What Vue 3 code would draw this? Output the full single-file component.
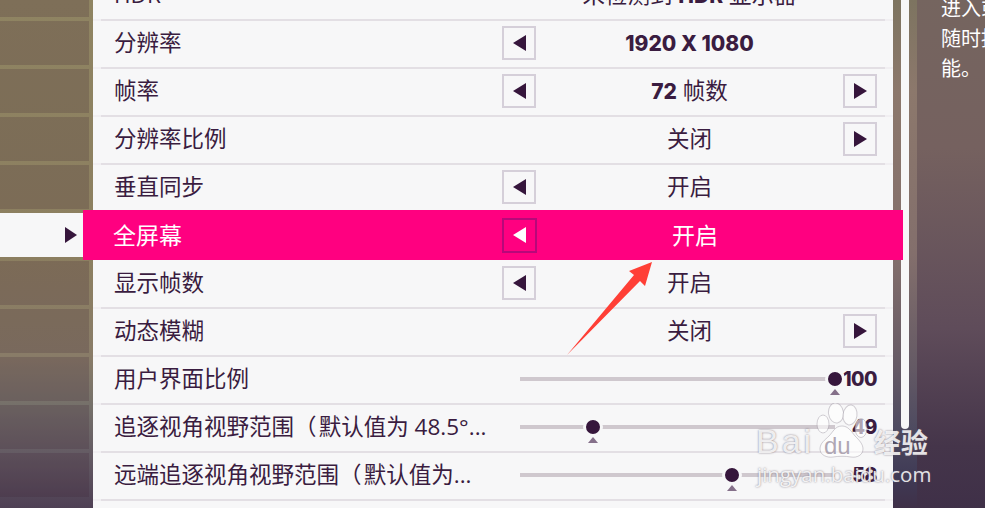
<script setup>
import { computed } from 'vue'

// Each row is either a left/right picker or a slider
const rows = [
  { label: 'HDR', pre: '未检测到 ', strong: 'HDR', post: ' 显示器' },
  { label: '分辨率', strong: '1920 X 1080', left: true },
  { label: '帧率', strong: '72', post: ' 帧数', left: true, right: true },
  { label: '分辨率比例', post: '关闭', right: true },
  { label: '垂直同步', post: '开启', left: true },
  { label: '全屏幕', post: '开启', left: true, active: true },
  { label: '显示帧数', post: '开启', left: true },
  { label: '动态模糊', post: '关闭', right: true },
  { label: '用户界面比例', slider: 100, shown: 100 },
  { label: '追逐视角视野范围（\u200A默认值为 48.5°...', slider: 23.2, shown: 49 },
  { label: '远端追逐视角视野范围（\u200A默认值为...', slider: 67.3, shown: 58 }
]

// Background cells on the left follow the same rows as the list
const cells = computed(() => rows.map((row) => row.active === true))
</script>

<template>
  <div class="screen">
    <aside class="tabs">
      <div v-for="(selected, i) in cells" :key="i" class="tab" :class="{ 'tab-selected': selected }">
        <span v-if="selected" class="tab-arrow"></span>
      </div>
    </aside>

    <main class="panel">
      <div v-for="row in rows" :key="row.label" class="row" :class="{ 'row-active': row.active }">
        <div class="row-label">{{ row.label }}</div>

        <div v-if="row.slider !== undefined" class="slider">
          <div class="slider-track">
            <span class="slider-knob" :style="{ left: row.slider + '%' }"></span>
            <span class="slider-mark" :style="{ left: row.slider + '%' }"></span>
          </div>
          <div class="slider-value">{{ row.shown }}</div>
        </div>

        <div v-else class="picker">
          <button v-if="row.left" class="picker-btn picker-prev"><span class="tri-left"></span></button>
          <div class="picker-value">{{ row.pre }}<b v-if="row.strong">{{ row.strong }}</b>{{ row.post }}</div>
          <button v-if="row.right" class="picker-btn picker-next"><span class="tri-right"></span></button>
        </div>
      </div>
    </main>

    <div class="scroll">
      <div class="scroll-thumb"></div>
    </div>

    <section class="help">
      <p>进入或退出全屏幕</p>
      <p>随时按下此功</p>
      <p>能。</p>
    </section>

    <!-- red annotation arrow -->
    <svg class="note-arrow" width="985" height="508" viewBox="0 0 985 508">
      <polygon points="567,355 634,275 629,271 652,262 645,286 640,281" fill="#ff3f36" />
    </svg>

    <!-- watermark -->
    <div class="mark">
      <svg class="mark-paw" width="60" height="60" viewBox="0 0 60 60">
        <ellipse cx="8" cy="21" rx="6" ry="9" />
        <ellipse cx="21" cy="10" rx="7.5" ry="10" transform="rotate(-8 21 10)" />
        <ellipse cx="35" cy="12" rx="7" ry="10" transform="rotate(8 35 12)" />
        <ellipse cx="46" cy="25" rx="6" ry="9.5" />
        <path d="M27 23c6 0 9 5 13 10 4 4 8 8 8 13 0 6-6 9-12 8-6-1-12-1-18 0-6 1-13-2-13-8 0-6 5-9 9-13 4-4 6-10 13-10z" />
      </svg>
      <div class="mark-logo">Bai</div>
      <div class="mark-du">du</div>
      <div class="mark-cn">经验</div>
      <div class="mark-url">jingyan.baidu.com</div>
    </div>
  </div>
</template>

<style>
html,
body {
  margin: 0;
  background: #4a3a50;
}
</style>

<style scoped>
.screen {
  position: relative;
  display: flex;
  width: 985px;
  height: 508px;
  overflow: hidden;
  font-family: "Open Sans", "Noto Sans CJK SC", sans-serif;
  color: #3a1c40;
}

/* left column with the stripes between cells */
.tabs {
  flex: 0 0 93px;
  box-sizing: border-box;
  display: flex;
  flex-direction: column;
  gap: 4px;
  padding-right: 4px;
  overflow: hidden;
  background: linear-gradient(#8f8462 0%, #8c7f60 50%, #897c68 70%, #75706a 80%, #655c64 89%, #4e4054 100%);
}

.tab {
  flex: 0 0 44px;
  display: flex;
  align-items: center;
  justify-content: flex-end;
  background: rgba(60, 30, 50, 0.2);
}

.tab:first-child {
  margin-top: -27px;
}

.tab-selected {
  background: #f7f7f8;
  padding-right: 12px;
}

.tab-arrow {
  width: 0;
  height: 0;
  border-left: 12px solid #36163c;
  border-top: 8px solid transparent;
  border-bottom: 8px solid transparent;
}

.panel {
  position: relative;
  z-index: 1;
  flex: 0 0 800px;
  display: flex;
  flex-direction: column;
  background: #f7f7f8;
}

/* the divider is strong between 8px insets and faint beyond them */
.row {
  flex: 0 0 48px;
  box-sizing: border-box;
  display: grid;
  grid-template-columns: 1fr 375px;
  align-items: center;
  padding: 0 16px 4px 21px;
  background: linear-gradient(to right, #f1eff2 8px, #e3dfe4 8px, #e3dfe4 calc(100% - 8px), #f1eff2 calc(100% - 8px)) left bottom / 100% 2px no-repeat;
  font-size: 22.5px;
  line-height: 28px;
}

.row:first-child {
  margin-top: -27px;
}

.row-active {
  position: relative;
  z-index: 2;
  flex: 0 0 50px;
  grid-template-columns: 1fr 386px;
  margin: -3px -10px 1px;
  padding: 0 15px 0 30px;
  background: #ff0080;
  color: #fff;
  font-size: 23px;
}

.row-label {
  white-space: nowrap;
}

.picker {
  display: grid;
  grid-template-columns: 34px 1fr 34px;
  align-items: center;
  height: 34px;
}

.row-active .picker {
  grid-template-columns: 35px 1fr 35px;
  height: 35px;
}

.picker-value {
  grid-column: 2;
  grid-row: 1;
  text-align: center;
  white-space: nowrap;
}

.picker-value b {
  font-family: "Inter", "Noto Sans", sans-serif;
  font-weight: 800;
  font-size: 21px;
}

.picker-btn {
  box-sizing: border-box;
  grid-row: 1;
  display: flex;
  align-items: center;
  justify-content: center;
  width: 100%;
  height: 100%;
  padding: 0;
  border: 2px solid #d5cfd9;
  border-radius: 0;
  background: #f7f7f8;
}

.picker-prev {
  grid-column: 1;
}

.picker-next {
  grid-column: 3;
}

.row-active .picker-btn {
  border-color: #b8087a;
  background: transparent;
}

.tri-left,
.tri-right {
  width: 0;
  height: 0;
  border-top: 8.5px solid transparent;
  border-bottom: 8.5px solid transparent;
}

.tri-left {
  border-right: 13px solid #36163c;
}

.tri-right {
  border-left: 13px solid #36163c;
}

.row-active .tri-left {
  border-right-color: #fff;
}

.slider {
  display: flex;
  align-items: center;
  padding-left: 18px;
}

.slider-track {
  position: relative;
  flex: 0 0 315px;
  height: 4px;
  background: #cfc8ce;
}

.slider-knob {
  position: absolute;
  top: 50%;
  width: 14px;
  height: 14px;
  border: 3px solid #f7f7f8;
  border-radius: 50%;
  background: #36163c;
  transform: translate(-50%, -50%);
}

.slider-mark {
  position: absolute;
  top: 12px;
  width: 0;
  height: 0;
  border-left: 5px solid transparent;
  border-right: 5px solid transparent;
  border-bottom: 6px solid #85708a;
  transform: translateX(-50%);
}

.slider-value {
  flex: 1;
  text-align: right;
  font-family: "Inter", "Noto Sans", sans-serif;
  font-weight: 800;
  font-size: 19.5px;
  letter-spacing: -0.5px;
}

/* scrollbar channel */
.scroll {
  flex: 0 0 24px;
  box-sizing: border-box;
  padding: 0 8px;
  background: linear-gradient(#7d7460 0%, #8c786c 18%, #836f6c 50%, #655a65 72%, #4d4a60 85%, #3f3a55 94%, #3f3048 100%);
}

.scroll-thumb {
  height: 429px;
  border-radius: 0 0 4px 4px;
  background: #f7f7f8;
}

.help {
  flex: 1;
  margin-top: -6px;
  padding-left: 24px;
  background: linear-gradient(#75655f 0%, #75615f 30%, #5f4c5a 65%, #45354a 88%, #3f3048 100%);
  color: #fff;
  font-size: 20px;
  line-height: 30px;
  white-space: nowrap;
}

.help p {
  margin: 0;
}

.note-arrow {
  position: absolute;
  left: 0;
  top: 0;
  z-index: 3;
  pointer-events: none;
}

.mark {
  position: absolute;
  left: 755px;
  top: 403px;
  z-index: 4;
  width: 180px;
  height: 90px;
  color: rgba(255, 255, 255, 0.85);
  text-shadow: 0 0 2px rgba(100, 90, 105, 0.8);
}

.mark-paw {
  position: absolute;
  left: 60px;
  top: 0;
  fill: rgba(255, 255, 255, 0.6);
  stroke: rgba(130, 120, 135, 0.35);
  stroke-width: 1;
}

.mark-logo {
  position: absolute;
  left: 1px;
  top: 19px;
  font-family: "Liberation Sans", sans-serif;
  font-size: 34px;
  line-height: 38px;
  letter-spacing: 3px;
  white-space: nowrap;
}

.mark-du {
  position: absolute;
  left: 69px;
  top: 30px;
  font-family: "Liberation Sans", sans-serif;
  font-size: 24px;
  line-height: 26px;
  color: rgba(165, 155, 170, 0.9);
  text-shadow: none;
}

.mark-cn {
  position: absolute;
  left: 119px;
  top: 20px;
  font-family: "Noto Sans CJK SC", sans-serif;
  font-weight: 700;
  font-size: 27px;
  line-height: 38px;
  white-space: nowrap;
}

.mark-url {
  position: absolute;
  left: 2px;
  top: 57px;
  font-size: 20.5px;
  line-height: 28px;
  white-space: nowrap;
}
</style>
